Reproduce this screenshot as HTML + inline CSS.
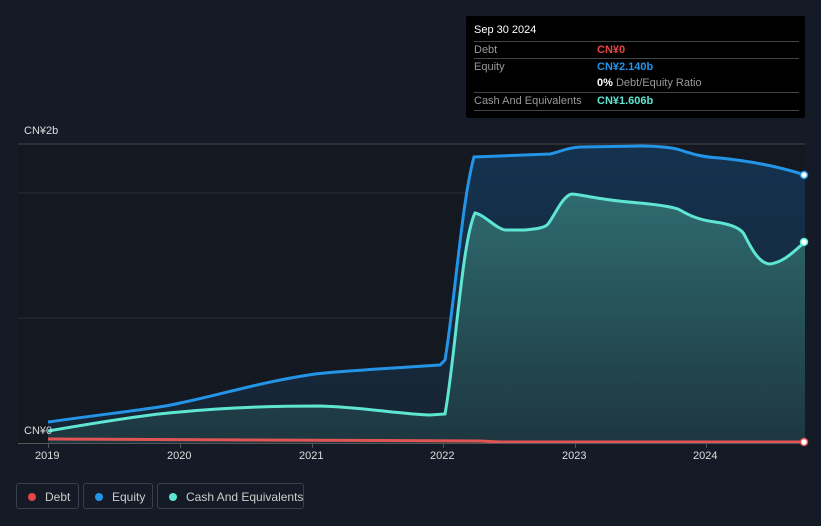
<!DOCTYPE html>
<html><head><style>
body{margin:0;width:821px;height:526px;background:#151b26;font-family:"Liberation Sans",sans-serif;overflow:hidden;position:relative}
.tt{position:absolute;left:466px;top:16px;width:339px;height:102px;background:#000;border-radius:2px}
.tt .h{position:absolute;left:8px;top:8px;color:#fff;font-size:11px}
.row{position:absolute;left:8px;width:325px;border-top:1px solid #444;height:17px;font-size:11px;color:#999;line-height:17px;white-space:nowrap}
.row span{position:absolute;left:123px;font-weight:bold}
.leg{position:absolute;top:483px;height:26px;border:1px solid #3a404c;border-radius:3px;color:#ccc;font-size:12px;line-height:26px;box-sizing:border-box;white-space:nowrap}
.leg i{position:absolute;left:11px;top:9px;width:8px;height:8px;border-radius:50%}
.ax{position:absolute;top:450px;color:#ddd;font-size:11px}
</style></head><body>
<svg width="821" height="526" style="position:absolute;left:0;top:0">
<defs>
<linearGradient id="eg" x1="0" y1="0" x2="0" y2="1"><stop offset="0" stop-color="#14324f"/><stop offset="1" stop-color="#162433"/></linearGradient>
<linearGradient id="cg" x1="0" y1="0" x2="0" y2="1"><stop offset="0" stop-color="#2f6b70"/><stop offset="1" stop-color="#1d3640"/></linearGradient>
</defs>
<rect x="18" y="144" width="787" height="299" fill="#131821"/>
<line x1="18" y1="144" x2="805" y2="144" stroke="#444" />
<line x1="18" y1="193" x2="805" y2="193" stroke="#2a303a" />
<line x1="18" y1="318" x2="805" y2="318" stroke="#2a303a" />
<path d="M48,422 C120,412 160,408 180,403 C220,395 260,382 315,374 C340,371 380,369 440,365 L445,360 C455,300 462,200 474,157 L550,154 C560,152 565,148 580,147 L640,146 C660,146 675,148 680,150 C690,153 700,157 720,158 C750,161 780,167 805,175 L805,443 L48,443Z" fill="url(#eg)"/>
<path d="M48,431 C100,422 150,414 180,412 C220,408 260,406 320,406 C360,407 400,414 430,415 L445,414 C455,360 462,240 475,213 C485,215 495,228 505,230 L525,230 C535,229 545,228 548,224 C555,215 563,195 572,194 C590,196 600,200 640,203 C660,205 675,207 680,210 C690,216 700,220 715,222 C730,224 742,228 745,236 C752,250 760,264 770,264 C785,262 795,250 805,242 L805,443 L48,443Z" fill="url(#cg)"/>
<path d="M48,422 C120,412 160,408 180,403 C220,395 260,382 315,374 C340,371 380,369 440,365 L445,360 C455,300 462,200 474,157 L550,154 C560,152 565,148 580,147 L640,146 C660,146 675,148 680,150 C690,153 700,157 720,158 C750,161 780,167 805,175" fill="none" stroke="#2394e6" stroke-width="3"/>
<path d="M48,431 C100,422 150,414 180,412 C220,408 260,406 320,406 C360,407 400,414 430,415 L445,414 C455,360 462,240 475,213 C485,215 495,228 505,230 L525,230 C535,229 545,228 548,224 C555,215 563,195 572,194 C590,196 600,200 640,203 C660,205 675,207 680,210 C690,216 700,220 715,222 C730,224 742,228 745,236 C752,250 760,264 770,264 C785,262 795,250 805,242" fill="none" stroke="#5ee6d2" stroke-width="3"/>
<path d="M48,439 L480,441 L500,442 L805,442" fill="none" stroke="#e05454" stroke-width="3"/>
<line x1="18" y1="443.5" x2="805" y2="443.5" stroke="#555"/>
<g stroke="#555"><line x1="48.5" y1="443" x2="48.5" y2="448"/><line x1="180.5" y1="443" x2="180.5" y2="448"/><line x1="312.5" y1="443" x2="312.5" y2="448"/><line x1="443.5" y1="443" x2="443.5" y2="448"/><line x1="575.5" y1="443" x2="575.5" y2="448"/><line x1="706.5" y1="443" x2="706.5" y2="448"/></g>
<circle cx="804" cy="175" r="3.5" fill="#fff" stroke="#2394e6" stroke-width="1.5"/>
<circle cx="804" cy="242" r="3.5" fill="#fff" stroke="#5ee6d2" stroke-width="1.5"/>
<circle cx="804" cy="442" r="3.5" fill="#fff" stroke="#e05454" stroke-width="1.5"/>
</svg>
<div style="position:absolute;left:24px;top:125px;color:#ddd;font-size:11px">CN¥2b</div>
<div style="position:absolute;left:24px;top:425px;color:#ddd;font-size:11px">CN¥0</div>
<div class="ax" style="left:35px">2019</div><div class="ax" style="left:167px">2020</div><div class="ax" style="left:299px">2021</div><div class="ax" style="left:430px">2022</div><div class="ax" style="left:562px">2023</div><div class="ax" style="left:693px">2024</div>
<div class="tt">
<div class="h">Sep 30 2024</div>
<div class="row" style="top:25px">Debt<span style="color:#e84545">CN¥0</span></div>
<div class="row" style="top:42px">Equity<span style="color:#2394e6">CN¥2.140b</span></div>
<div class="row" style="top:59px;border-top:none"><span style="color:#fff">0% <b style="color:#999;font-weight:normal">Debt/Equity Ratio</b></span></div>
<div class="row" style="top:76px">Cash And Equivalents<span style="color:#5ee6d2">CN¥1.606b</span></div>
<div style="position:absolute;left:8px;top:94px;width:325px;border-top:1px solid #444"></div>
</div>
<div class="leg" style="left:16px;width:63px"><i style="background:#e84545"></i><span style="position:absolute;left:28px">Debt</span></div>
<div class="leg" style="left:83px;width:70px"><i style="background:#2394e6"></i><span style="position:absolute;left:28px">Equity</span></div>
<div class="leg" style="left:157px;width:147px"><i style="background:#5ee6d2"></i><span style="position:absolute;left:28px">Cash And Equivalents</span></div>
</body></html>
